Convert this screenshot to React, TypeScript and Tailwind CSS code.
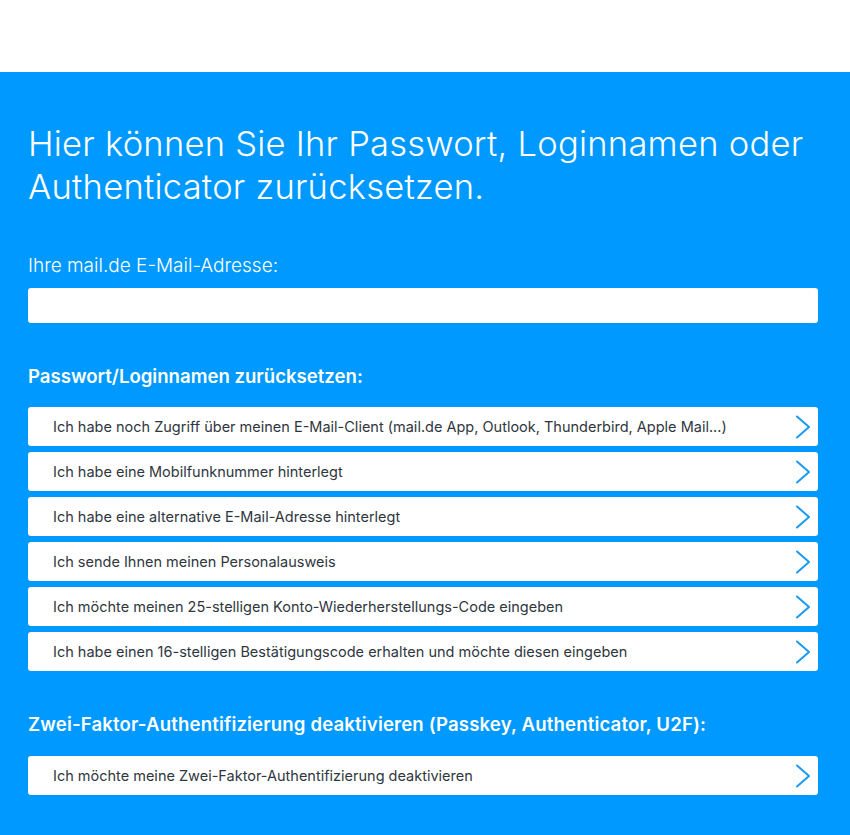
import React from "react";

const resetOptions = [
  "Ich habe noch Zugriff über meinen E-Mail-Client (mail.de App, Outlook, Thunderbird, Apple Mail...)",
  "Ich habe eine Mobilfunknummer hinterlegt",
  "Ich habe eine alternative E-Mail-Adresse hinterlegt",
  "Ich sende Ihnen meinen Personalausweis",
  "Ich möchte meinen 25-stelligen Konto-Wiederherstellungs-Code eingeben",
  "Ich habe einen 16-stelligen Bestätigungscode erhalten und möchte diesen eingeben",
];

const twoFactorOptions = ["Ich möchte meine Zwei-Faktor-Authentifizierung deaktivieren"];

function Chevron() {
  return (
    <svg width="16" height="24" viewBox="0 0 16 24" fill="none" className="shrink-0">
      <path d="M2 1.5 L14 12 L2 22.5" stroke="#1a9af0" strokeWidth="2" strokeLinecap="round" strokeLinejoin="round" />
    </svg>
  );
}

function OptionRow({ label }: { label: string }) {
  return (
    <a
      href="#"
      className="flex h-[39px] items-center justify-between rounded-[3px] bg-white pl-[25px] pr-[7px] text-[14.5px] text-[#2f3640] no-underline"
    >
      <span className="truncate">{label}</span>
      <Chevron />
    </a>
  );
}

export default function App() {
  return (
    <div
      className="min-h-[835px] bg-[#0099ff]"
      style={{ fontFamily: 'Inter, "Noto Sans", "Liberation Sans", sans-serif' }}
    >
      <header className="h-[72px] bg-white" />
      <main className="px-[28px] pt-[50px] pb-10 text-white">
        <h1 className="text-[34.5px] font-light leading-[43px] tracking-[0.25px]">
          Hier können Sie Ihr Passwort, Loginnamen oder Authenticator zurücksetzen.
        </h1>

        <label className="mt-[45px] block text-[19px] font-light leading-[26px]">
          Ihre mail.de E-Mail-Adresse:
        </label>
        <input
          type="text"
          className="mt-[9px] block h-[35px] w-[790px] rounded-[3px] bg-white px-3 text-[15px] text-[#2f3640] outline-none"
        />

        <h2 className="mt-[40px] text-[18.6px] font-semibold leading-[26px]">
          Passwort/Loginnamen zurücksetzen:
        </h2>
        <div className="mt-[18px] flex w-[790px] flex-col gap-[6px]">
          {resetOptions.map((o) => (
            <OptionRow key={o} label={o} />
          ))}
        </div>

        <h2 className="mt-[40px] text-[18.6px] font-semibold leading-[26px] tracking-[0.15px]">
          Zwei-Faktor-Authentifizierung deaktivieren (Passkey, Authenticator, U2F):
        </h2>
        <div className="mt-[19px] flex w-[790px] flex-col gap-[6px]">
          {twoFactorOptions.map((o) => (
            <OptionRow key={o} label={o} />
          ))}
        </div>
      </main>
    </div>
  );
}
